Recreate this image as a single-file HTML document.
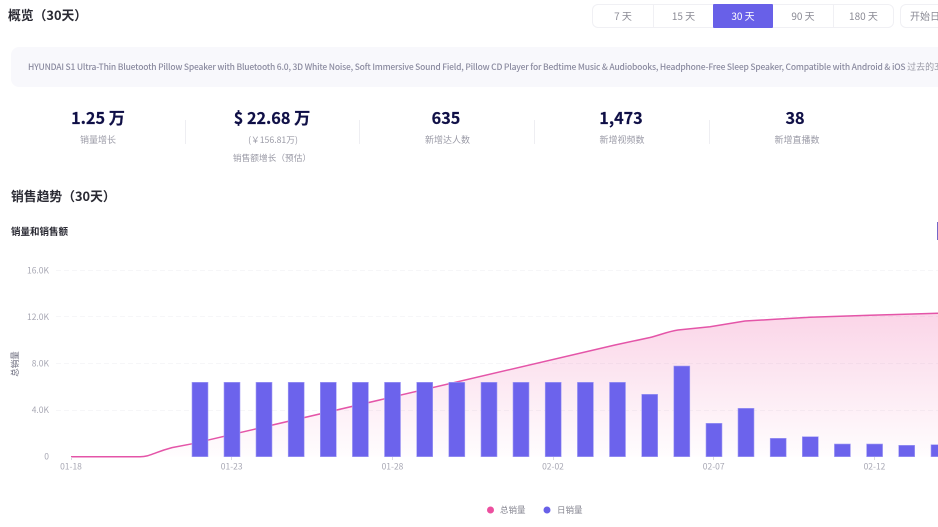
<!DOCTYPE html>
<html lang="zh">
<head>
<meta charset="utf-8">
<style>
html,body{margin:0;padding:0;background:#fff}
body{width:938px;height:527px;overflow:hidden;position:relative;font-family:"Noto Sans CJK SC","Liberation Sans",sans-serif;filter:blur(.3px)}
.a{position:absolute;white-space:nowrap}
.c{transform:translateX(-50%)}
.tab{position:absolute;top:4px;height:24px;line-height:24px;text-align:center;font-size:10px;color:#8a8a94;box-sizing:border-box}
.num{font-size:16.2px;font-weight:700;color:#0f0f46;line-height:24px;top:104.5px;-webkit-text-stroke:.2px #0f0f46}
.lab{font-size:9px;color:#9a9aa6;line-height:12px}
.div{position:absolute;width:1px;background:#eeeef2;top:120px;height:24px}
</style>
</head>
<body>
<div class="a" style="left:8px;top:5px;font-size:12.8px;font-weight:700;color:#2a2a33;line-height:20px">概览（30天）</div>

<div class="a" style="left:592px;top:4px;width:302px;height:24px;border:1px solid #f0f0f4;border-radius:6px;box-sizing:border-box"></div>
<div class="tab" style="left:593px;width:60px">7 天</div>
<div class="tab" style="left:653px;width:60px;border-left:1px solid #f0f0f4">15 天</div>
<div class="tab" style="left:713px;width:60px;background:#6860e8;color:#fff;border-radius:1px">30 天</div>
<div class="tab" style="left:773px;width:60px">90 天</div>
<div class="tab" style="left:833px;width:60px;border-left:1px solid #f0f0f4">180 天</div>
<div class="a" style="left:900px;top:4px;width:60px;height:24px;border:1px solid #f0f0f4;border-radius:6px;box-sizing:border-box;font-size:10px;line-height:22px;color:#8a8a94;padding-left:9px">开始日期</div>

<div class="a" style="left:11px;top:47px;width:940px;height:40px;background:#f8f8fc;border-radius:8px"></div>
<div class="a" style="left:28px;top:60px;width:910px;overflow:hidden;font-size:8.5px;letter-spacing:-.19px;line-height:14px;color:#8b8ba0;font-weight:500">HYUNDAI S1 Ultra-Thin Bluetooth Pillow Speaker with Bluetooth 6.0, 3D White Noise, Soft Immersive Sound Field, Pillow CD Player for Bedtime Music &amp; Audiobooks, Headphone-Free Sleep Speaker, Compatible with Android &amp; iOS <span style="font-weight:400;color:#9a9aa6;font-size:9px;letter-spacing:0">过去的30天</span></div>

<div class="a c num" style="left:98px">1.25 万</div>
<div class="a c lab" style="left:98px;top:134px">销量增长</div>
<div class="div" style="left:185px"></div>
<div class="a c num" style="left:272px">$ 22.68 万</div>
<div class="a c lab" style="left:273px;top:134px;font-size:8.7px">(￥156.81万)</div>
<div class="a c lab" style="left:272px;top:152px;font-size:8.7px">销售额增长（预估）</div>
<div class="div" style="left:359px"></div>
<div class="a c num" style="left:446px">635</div>
<div class="a c lab" style="left:447.5px;top:134px">新增达人数</div>
<div class="div" style="left:534px"></div>
<div class="a c num" style="left:621px">1,473</div>
<div class="a c lab" style="left:622px;top:134px">新增视频数</div>
<div class="div" style="left:709px"></div>
<div class="a c num" style="left:795px">38</div>
<div class="a c lab" style="left:797px;top:134px">新增直播数</div>

<div class="a" style="left:11px;top:186px;font-size:12.8px;font-weight:700;color:#2a2a33;line-height:20px">销售趋势（30天）</div>
<div class="a" style="left:11px;top:224px;font-size:9.5px;font-weight:700;color:#2a2a33;line-height:14px">销量和销售额</div>
<div class="a" style="left:937px;top:222px;width:1px;height:18px;background:#7468c8"></div>

<svg class="a" style="left:0;top:0" width="938" height="527" viewBox="0 0 938 527">
<defs>
<linearGradient id="g" gradientUnits="userSpaceOnUse" x1="0" y1="313" x2="0" y2="457">
<stop offset="0" stop-color="#ec4899" stop-opacity=".23"/>
<stop offset="1" stop-color="#ec4899" stop-opacity=".01"/>
</linearGradient>
</defs>
<g stroke="#f6f6f8" stroke-width="1" stroke-dasharray="5 3">
<line x1="56" x2="938" y1="270.5" y2="270.5"/>
<line x1="56" x2="938" y1="316.5" y2="316.5"/>
<line x1="56" x2="938" y1="363.5" y2="363.5"/>
<line x1="56" x2="938" y1="410.5" y2="410.5"/>
</g>
<path fill="url(#g)" d="M71 456.7L140 456.7C147 456.7 150 455 156 452.8C162 450.5 166 449.2 172 447.6L192 443.8L615 345L650 337.5C660 335 668 331.5 678 330L710 326.7L745 321L775 319.3L810 317.3L870 315.3L938 313.3L938 456.7Z"/>
<path fill="none" stroke="#e455a8" stroke-width="1.5" d="M71 456.7L140 456.7C147 456.7 150 455 156 452.8C162 450.5 166 449.2 172 447.6L192 443.8L615 345L650 337.5C660 335 668 331.5 678 330L710 326.7L745 321L775 319.3L810 317.3L870 315.3L938 313.3"/>
<g fill="#6c63ec" stroke="#a5a0f5" stroke-width=".6">
<rect x="192" y="382.3" width="16" height="74.4"/>
<rect x="224" y="382.3" width="16" height="74.4"/>
<rect x="256" y="382.3" width="16" height="74.4"/>
<rect x="288.2" y="382.3" width="16" height="74.4"/>
<rect x="320.3" y="382.3" width="16" height="74.4"/>
<rect x="352.4" y="382.3" width="16" height="74.4"/>
<rect x="384.5" y="382.3" width="16" height="74.4"/>
<rect x="416.7" y="382.3" width="16" height="74.4"/>
<rect x="448.8" y="382.3" width="16" height="74.4"/>
<rect x="481" y="382.3" width="16" height="74.4"/>
<rect x="513" y="382.3" width="16" height="74.4"/>
<rect x="545.2" y="382.3" width="16" height="74.4"/>
<rect x="577.4" y="382.3" width="16" height="74.4"/>
<rect x="609.5" y="382.3" width="16" height="74.4"/>
<rect x="641.7" y="394.3" width="16" height="62.4"/>
<rect x="673.8" y="366" width="16" height="90.7"/>
<rect x="706" y="423.3" width="16" height="33.4"/>
<rect x="738" y="408.3" width="16" height="48.4"/>
<rect x="770.2" y="438.3" width="16" height="18.4"/>
<rect x="802.3" y="436.7" width="16" height="20"/>
<rect x="834.4" y="444" width="16" height="12.7"/>
<rect x="866.6" y="444" width="16" height="12.7"/>
<rect x="898.7" y="445.3" width="16" height="11.4"/>
<rect x="931" y="444.7" width="16" height="12"/>
</g>
<g stroke="#d8d8e0" stroke-width="1">
<line x1="71.5" x2="71.5" y1="457" y2="460"/>
<line x1="231.5" x2="231.5" y1="457" y2="460"/>
<line x1="392.5" x2="392.5" y1="457" y2="460"/>
<line x1="553.5" x2="553.5" y1="457" y2="460"/>
<line x1="713.5" x2="713.5" y1="457" y2="460"/>
<line x1="874.5" x2="874.5" y1="457" y2="460"/>
</g>
<g font-family="'Noto Sans CJK SC','Liberation Sans',sans-serif" font-size="8.5" fill="#a8a8b4">
<text x="49" y="273.5" text-anchor="end">16.0K</text>
<text x="49" y="320" text-anchor="end">12.0K</text>
<text x="49" y="366.5" text-anchor="end">8.0K</text>
<text x="49" y="413" text-anchor="end">4.0K</text>
<text x="49" y="459.5" text-anchor="end">0</text>
<text x="71" y="469.5" text-anchor="middle">01-18</text>
<text x="231.7" y="469.5" text-anchor="middle">01-23</text>
<text x="392.5" y="469.5" text-anchor="middle">01-28</text>
<text x="553" y="469.5" text-anchor="middle">02-02</text>
<text x="713.7" y="469.5" text-anchor="middle">02-07</text>
<text x="874.5" y="469.5" text-anchor="middle">02-12</text>
</g>
<text transform="translate(18,364) rotate(-90)" text-anchor="middle" font-family="'Noto Sans CJK SC',sans-serif" font-size="8.5" fill="#666678">总销量</text>
<circle cx="490.5" cy="510" r="3.5" fill="#ec4f9f"/>
<circle cx="547" cy="510" r="3.5" fill="#6860e8"/>
<g font-family="'Noto Sans CJK SC',sans-serif" font-size="8.5" fill="#858590">
<text x="500" y="513">总销量</text>
<text x="557" y="513">日销量</text>
</g>
</svg>
</body>
</html>
